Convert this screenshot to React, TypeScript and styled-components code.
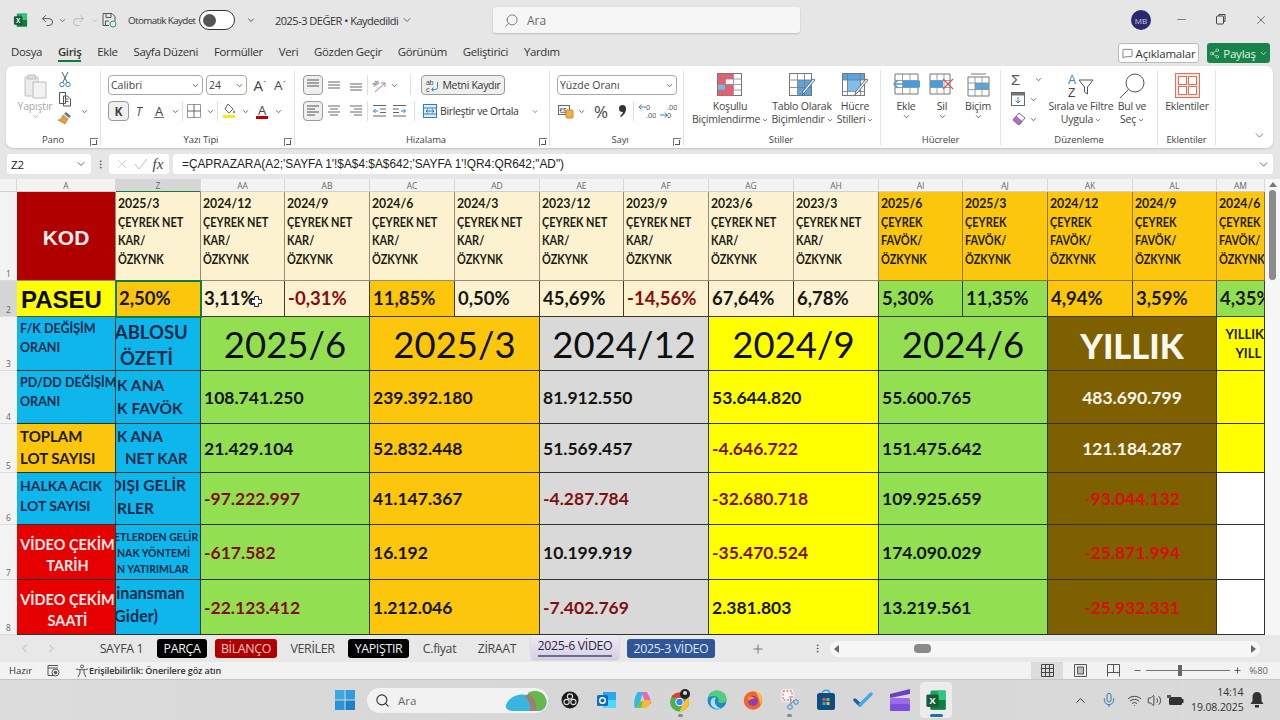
import React from 'react';
import styled, { createGlobalStyle } from 'styled-components';
import { Search, Undo2, Redo2, ChevronDown, ChevronLeft, ChevronRight, Minus, X, Plus, MessageSquare, Share2, Mic, Wifi, Volume2, ChevronUp, MoreVertical } from 'lucide-react';

const UI = '"Open Sans", "Noto Sans", sans-serif';
const CELL = 'Lato, "Open Sans", sans-serif';

const GlobalStyle = createGlobalStyle`
  html, body { margin: 0; padding: 0; background: #e6e6e6; }
  body { font-family: ${UI}; overflow: hidden; }
  * { box-sizing: border-box; }
`;

/* ---------- title bar ---------- */

const Page = styled.div`
  width: 1280px;
  height: 720px;
  display: flex;
  flex-direction: column;
  background: #e6e6e6;
  color: #333;
`;

const TitleBar = styled.div`
  height: 38px;
  display: flex;
  align-items: center;
  padding: 2px 0 0 13px;
  flex: none;
`;

const QuickIcon = styled.div<{ $w: number; $dim?: boolean; $ml?: number }>`
  width: ${p => p.$w}px;
  margin-left: ${p => p.$ml ?? 0}px;
  flex: none;
  display: flex;
  align-items: center;
  justify-content: center;
  color: ${p => (p.$dim ? '#b5b5b5' : '#444')};
`;

const AutoSave = styled.span`
  font-size: 9.8px;
  letter-spacing: -0.6px;
  margin-left: 8px;
  width: 71px;
  flex: none;
  color: #333;
  white-space: nowrap;
`;

const Toggle = styled.div`
  width: 36px;
  height: 20px;
  border: 1px solid #333;
  border-radius: 10px;
  background: #fff;
  display: flex;
  align-items: center;
  padding-left: 3px;
  flex: none;
  &::before {
    content: '';
    width: 13px;
    height: 13px;
    border-radius: 50%;
    background: #555;
  }
`;

const DocTitle = styled.div`
  font-size: 11px;
  letter-spacing: -0.5px;
  width: 218px;
  margin-left: 9px;
  flex: none;
  display: flex;
  align-items: center;
  gap: 3px;
`;

const TopSearch = styled.div`
  width: 307px;
  height: 26px;
  background: #f6f6f6;
  border-radius: 3px;
  box-shadow: 0 1px 2px rgba(0, 0, 0, 0.18);
  display: flex;
  align-items: center;
  gap: 8px;
  padding-left: 11px;
  font-size: 12px;
  color: #666;
  flex: none;
`;

const MirrorSearch = styled(Search)`
  transform: scaleX(-1);
`;

const Avatar = styled.div`
  width: 20px;
  height: 20px;
  border-radius: 50%;
  background: #2c2a6e;
  color: #cfcfe6;
  font-size: 8px;
  display: flex;
  align-items: center;
  justify-content: center;
  margin-left: 331px;
  flex: none;
`;

const WinButtons = styled.div`
  display: flex;
  margin-left: 10px;
  color: #444;
`;

const WinButton = styled.div`
  width: 40px;
  display: flex;
  justify-content: center;
`;

/* ---------- menu ---------- */

const MenuBar = styled.div`
  height: 28px;
  flex: none;
  display: flex;
  align-items: center;
  padding: 2px 10px 0 11px;
`;

const MenuItem = styled.div<{ $active?: boolean }>`
  font-size: 11.4px;
  letter-spacing: -0.3px;
  margin-right: 15.8px;
  color: #333;
  font-weight: ${p => (p.$active ? 600 : 400)};
  padding-bottom: 1px;
  border-bottom: 2px solid ${p => (p.$active ? '#107c41' : 'transparent')};
`;

const MenuActions = styled.div`
  margin-left: auto;
  display: flex;
  gap: 8px;
`;

const CommentButton = styled.div`
  width: 81px;
  height: 20px;
  background: #fff;
  border: 1px solid #bbb;
  border-radius: 3px;
  font-size: 11.5px;
  letter-spacing: -0.2px;
  display: flex;
  align-items: center;
  justify-content: center;
  gap: 3px;
`;

const ShareButton = styled.div`
  width: 63px;
  height: 20px;
  background: #17854a;
  color: #e6f3ea;
  border-radius: 3px;
  font-size: 11.5px;
  letter-spacing: -0.2px;
  display: flex;
  align-items: center;
  justify-content: center;
  gap: 3px;
`;

/* ---------- ribbon ---------- */

const Ribbon = styled.div`
  height: 82px;
  flex: none;
  margin: 0 7px 0 6px;
  background: #fff;
  border-radius: 7px;
  box-shadow: 0 1px 2px rgba(0, 0, 0, 0.15);
  display: flex;
  position: relative;
`;

const Group = styled.div<{ $w: number; $pad?: number; $noLine?: boolean }>`
  width: ${p => p.$w}px;
  flex: none;
  position: relative;
  margin: 4px 0 3px;
  padding: 2px 0 0 ${p => p.$pad ?? 0}px;
  display: flex;
  flex-direction: column;
  border-right: ${p => (p.$noLine ? 'none' : '1px solid #e2e2e2')};
`;

const GroupBody = styled.div`
  flex: 1;
  display: flex;
  min-height: 0;
`;

const GroupLabel = styled.div<{ $ml?: number }>`
  height: 17px;
  font-size: 9.5px;
  letter-spacing: -0.1px;
  color: #444;
  text-align: center;
  line-height: 24px;
  margin-left: ${p => p.$ml ?? 0}px;
`;

const Launcher = styled.div`
  position: absolute;
  right: 2px;
  bottom: -1px;
  width: 8px;
  height: 8px;
  border-left: 1px solid #777;
  border-top: 1px solid #777;
  &::after {
    content: '';
    position: absolute;
    right: 1px;
    bottom: 1px;
    width: 4px;
    height: 4px;
    border-right: 1px solid #555;
    border-bottom: 1px solid #555;
  }
`;

const Rows = styled.div`
  display: flex;
  flex-direction: column;
  gap: 6px;
  padding-top: 3px;
`;

const ToolRow = styled.div`
  display: flex;
  align-items: center;
  height: 20px;
`;

const Slot = styled.div<{ $w: number; $active?: boolean; $dim?: boolean; $fs?: number }>`
  width: ${p => p.$w}px;
  height: 20px;
  flex: none;
  display: flex;
  align-items: center;
  justify-content: center;
  font-size: ${p => p.$fs ?? 12}px;
  color: ${p => (p.$dim ? '#aaa' : '#444')};
  border-radius: 4px;
  ${p => p.$active && 'background:#efefef;border:1px solid #9a9a9a;font-weight:700;'}
`;

const Caret = styled.span`
  font-size: 8px;
  line-height: 8px;
  align-self: flex-start;
  margin-top: 4px;
`;

const Sep = styled.div<{ $mx?: number }>`
  width: 1px;
  height: 20px;
  flex: none;
  background: #dedede;
  margin: 0 ${p => p.$mx ?? 1}px;
`;

const SelectBox = styled.div<{ $w: number; $mr?: number }>`
  width: ${p => p.$w}px;
  height: 20px;
  margin-right: ${p => p.$mr ?? 0}px;
  flex: none;
  border: 1px solid #a8a8a8;
  border-radius: 4px;
  font-size: 10.5px;
  padding: 0 3px 0 2px;
  display: flex;
  align-items: center;
  justify-content: space-between;
  color: #444;
`;

const WrapButton = styled.div`
  width: 84px;
  height: 20px;
  background: #efefef;
  border: 1px solid #9a9a9a;
  border-radius: 4px;
  display: flex;
  align-items: center;
  justify-content: center;
  gap: 2px;
  font-size: 10.5px;
  letter-spacing: -0.3px;
  color: #333;
`;

const MergeButton = styled.div`
  width: 113px;
  height: 20px;
  display: flex;
  align-items: center;
  padding-left: 4px;
  gap: 3px;
  font-size: 10.5px;
  letter-spacing: -0.35px;
  color: #333;
  white-space: nowrap;
  flex: none;
`;

const BigTool = styled.div<{ $w: number }>`
  width: ${p => p.$w}px;
  flex: none;
  display: flex;
  flex-direction: column;
  align-items: center;
`;

const BigIcon = styled.div`
  height: 28px;
  padding-top: 1px;
  display: flex;
  align-items: flex-start;
  justify-content: center;
`;

const BigLabel = styled.div<{ $dim?: boolean }>`
  font-size: 10.5px;
  line-height: 13px;
  letter-spacing: -0.2px;
  white-space: nowrap;
  text-align: center;
  color: ${p => (p.$dim ? '#a8a8a8' : '#444')};
  display: flex;
  align-items: center;
  justify-content: center;
  gap: 2px;
`;

const PasteCol = styled.div`
  width: 34px;
  margin-left: 12px;
  display: flex;
  flex-direction: column;
  align-items: center;
  flex: none;
`;

const SmallCol = styled.div<{ $w?: number; $start?: boolean }>`
  width: ${p => p.$w ?? 22}px;
  margin: -1px 0 0 2px;
  display: flex;
  flex-direction: column;
  align-items: ${p => (p.$start ? 'flex-start' : 'center')};
  gap: 3px;
  flex: none;
`;

const SmallRow = styled.div<{ $w: number }>`
  width: ${p => p.$w}px;
  height: 17px;
  display: flex;
  align-items: center;
  justify-content: space-between;
  flex: none;
`;

const RibbonCollapse = styled.div`
  position: absolute;
  right: 7px;
  bottom: 6px;
  color: #555;
  display: flex;
`;

/* ---------- formula bar ---------- */

const FormulaBar = styled.div`
  height: 20px;
  margin: 6px 7px 5px 7px;
  flex: none;
  display: flex;
  align-items: stretch;
`;

const NameBox = styled.div`
  width: 84px;
  background: #fff;
  border-radius: 3px;
  font-size: 11.5px;
  padding: 0 4px;
  display: flex;
  align-items: center;
  justify-content: space-between;
  color: #222;
`;

const FormulaDots = styled.div`
  width: 18px;
  display: flex;
  align-items: center;
  justify-content: center;
  color: #555;
`;

const FormulaIcons = styled.div`
  width: 60px;
  background: #fff;
  border-radius: 3px;
  display: flex;
  align-items: center;
  justify-content: space-around;
  padding: 0 3px;
  color: #bdbdbd;
`;

const Fx = styled.span`
  font-family: 'Liberation Serif', serif;
  font-style: italic;
  font-size: 15px;
  color: #444;
`;

const FormulaInput = styled.div`
  flex: 1;
  margin-left: 4px;
  background: #fff;
  border-radius: 3px;
  font-family: 'Liberation Sans', sans-serif;
  font-size: 11.85px;
  padding: 0 3px 0 9px;
  display: flex;
  align-items: center;
  justify-content: space-between;
  color: #222;
`;

/* ---------- sheet ---------- */

const SheetArea = styled.div`
  flex: none;
  height: 456px;
  display: flex;
  background: #f3f3f3;
`;

const SheetMain = styled.div`
  width: 1265px;
  flex: none;
  display: flex;
  flex-direction: column;
`;

const ColHeaders = styled.div`
  height: 13px;
  flex: none;
  display: grid;
  grid-template-columns: 17px 99px 85px 84px 85px 85px 85px 84px 85px 85px 85px 84px 85px 85px 84px 48px;
`;

const ColHead = styled.div<{ $sel?: boolean }>`
  font-size: 8.5px;
  line-height: 13px;
  text-align: center;
  color: #666;
  overflow: hidden;
  border-right: 1px solid #d8d8d8;
  background: ${p => (p.$sel ? '#d6d6d6' : 'transparent')};
  border-bottom: 1px solid ${p => (p.$sel ? '#107c41' : '#d0d0d0')};
`;

const SheetBody = styled.div`
  display: flex;
  height: 443px;
`;

const RowHeads = styled.div`
  width: 17px;
  flex: none;
  display: grid;
  grid-template-rows: 89px 36px 54px 53px 49px 52px 55px 55px;
`;

const RowHead = styled.div<{ $sel?: boolean }>`
  font-size: 8.5px;
  color: #666;
  text-align: center;
  display: flex;
  align-items: flex-end;
  justify-content: center;
  padding-bottom: 1px;
  background: ${p => (p.$sel ? '#d6d6d6' : 'transparent')};
  border-bottom: 1px solid #dcdcdc;
`;

const Grid = styled.div`
  flex: 1;
  display: grid;
  grid-template-columns: 99px 85px 84px 85px 85px 85px 84px 85px 85px 85px 84px 85px 85px 84px 48px;
  grid-template-rows: 89px 36px 54px 53px 49px 52px 55px 55px;
  font-family: ${CELL};
  font-weight: 700;
  overflow: hidden;
  background: #fff;
`;

const Cell = styled.div<{ $bg: string; $span?: number; $line?: string; $sel?: boolean }>`
  background: ${p => p.$bg};
  grid-column: span ${p => p.$span ?? 1};
  border-right: 1px solid ${p => p.$line ?? '#29372a'};
  border-bottom: 1px solid ${p => p.$line ?? '#29372a'};
  overflow: hidden;
  position: relative;
  white-space: nowrap;
  min-width: 0;
  ${p => p.$sel && 'outline:2px solid #107c41;outline-offset:-1px;z-index:2;overflow:visible;'}
`;

const HeadText = styled.div`
  font-size: 13.2px;
  line-height: 18.7px;
  padding: 2px 0 0 2px;
  color: #1d1b10;
`;

const HeadYear = styled.div`
  transform: scaleX(0.93);
  transform-origin: left;
`;

const HeadCaps = styled.div`
  transform: scaleX(0.83);
  transform-origin: left;
`;

const Pct = styled.div<{ $neg?: boolean }>`
  font-size: 18.5px;
  line-height: 34px;
  padding-left: 3px;
  color: ${p => (p.$neg ? '#8b0a0a' : '#171711')};
`;

const Num = styled.div<{ $neg?: boolean; $white?: boolean }>`
  height: 100%;
  display: flex;
  align-items: center;
  padding-left: 3px;
  font-size: 17.5px;
  color: ${p => (p.$white ? '#f7f5ee' : p.$neg ? '#7d1010' : '#14140e')};
`;

const WhiteNum = styled(Num)`
  justify-content: center;
  padding: 0;
`;

const RedNum = styled(WhiteNum)`
  color: #d80e0e;
`;

const Year = styled.div`
  height: 100%;
  display: flex;
  align-items: center;
  justify-content: center;
  font-weight: 400;
  font-size: 36.5px;
  color: #101010;
`;

const Yillik = styled(Year)`
  font-weight: 900;
  color: #faf8f0;
  font-size: 34.5px;
  padding-top: 3px;
`;

const KodText = styled.div`
  height: 100%;
  display: flex;
  align-items: center;
  justify-content: center;
  padding-top: 3px;
  color: #fbeeee;
  font-family: 'Liberation Sans', sans-serif;
  font-size: 21px;
`;

const Paseu = styled.div`
  font-size: 24px;
  line-height: 38px;
  padding-left: 4px;
  font-family: 'Liberation Sans', sans-serif;
  color: #0a0a00;
`;

const LabelStack = styled.div<{ $color: string; $center?: boolean; $size?: number; $lh?: number; $pt?: number }>`
  color: ${p => p.$color};
  font-size: ${p => p.$size ?? 12.5}px;
  line-height: ${p => p.$lh ?? 19}px;
  padding: ${p => p.$pt ?? 2}px 0 0 3px;
  text-align: ${p => (p.$center ? 'center' : 'left')};
`;

const ZText = styled.div<{ $size: number; $lh: number; $pt: number }>`
  color: #10294a;
  font-size: ${p => p.$size}px;
  line-height: ${p => p.$lh}px;
  padding-top: ${p => p.$pt}px;
`;

const ZLine = styled.div<{ $ind?: number }>`
  text-indent: ${p => p.$ind ?? 1}px;
`;

const YearSmall = styled.div`
  font-size: 13px;
  line-height: 19px;
  padding-top: 8px;
  color: #1a1a00;
  text-align: right;
`;

const CrossCursor = styled.svg`
  position: absolute;
  left: 50px;
  top: 15px;
`;

const VScroll = styled.div`
  width: 15px;
  flex: none;
  background: #f7f7f7;
  display: flex;
  flex-direction: column;
  align-items: center;
  padding-top: 3px;
  color: #777;
`;

const ScrollUp = styled.div`
  width: 0;
  height: 0;
  border-left: 4px solid transparent;
  border-right: 4px solid transparent;
  border-bottom: 5px solid #777;
`;

const ScrollThumb = styled.div`
  width: 7px;
  height: 90px;
  margin-top: 3px;
  border-radius: 4px;
  background: #8a8a8a;
`;

/* ---------- tabs / status ---------- */

const TabsBar = styled.div`
  height: 27px;
  flex: none;
  display: flex;
  align-items: center;
  background: #e8e8e8;
  font-size: 12.4px;
  letter-spacing: -0.35px;
`;

const TabNav = styled.div`
  width: 94px;
  padding-left: 18px;
  display: flex;
  gap: 14px;
  color: #a0a0a0;
  flex: none;
`;

const SheetTab = styled.div<{ $bg?: string; $fg?: string; $w: number; $mr?: number }>`
  width: ${p => p.$w}px;
  margin-right: ${p => p.$mr ?? 8}px;
  flex: none;
  height: 19px;
  border-radius: 3px;
  background: ${p => p.$bg ?? 'transparent'};
  color: ${p => p.$fg ?? '#444'};
  display: flex;
  align-items: center;
  justify-content: center;
  white-space: nowrap;
`;

const ActiveTab = styled(SheetTab)`
  height: 24px;
  margin-top: -4px;
  background: linear-gradient(#efeaf5, #d8cfe8);
  color: #26263c;
  box-shadow: 0 1px 2px rgba(0, 0, 0, 0.15);
  span {
    border-bottom: 2px solid #5f7186;
    padding-bottom: 1px;
  }
`;

const AddSheet = styled(Plus)`
  margin-left: 28px;
  color: #555;
  flex: none;
`;

const HScrollWrap = styled.div`
  margin-left: 47px;
  display: flex;
  align-items: center;
  color: #555;
  flex: none;
`;

const HScroll = styled.div`
  width: 430px;
  height: 16px;
  border-radius: 8px;
  background: #f7f7f7;
  margin-left: 7px;
  display: flex;
  align-items: center;
  justify-content: space-between;
  padding: 0 4px;
`;

const ThumbTrack = styled.div`
  flex: 1;
  padding-left: 75px;
`;

const HThumb = styled.div`
  width: 17px;
  height: 9px;
  background: #8a8a8a;
  border-radius: 4px;
`;

const Arrow = styled.div<{ $dir: 'l' | 'r' }>`
  width: 0;
  height: 0;
  border-top: 4px solid transparent;
  border-bottom: 4px solid transparent;
  ${p => (p.$dir === 'l' ? 'border-right:5px solid #666;' : 'border-left:5px solid #666;')}
`;

const StatusBar = styled.div`
  height: 18px;
  flex: none;
  background: #f2f2f2;
  border-bottom: 1px solid #c6c6c6;
  display: flex;
  align-items: center;
  padding-left: 9px;
  font-size: 9.5px;
  color: #333;
`;

const StatusHint = styled.span`
  font-weight: 600;
  font-size: 9px;
  letter-spacing: -0.1px;
`;

const ViewBtn = styled.div<{ $active?: boolean; $w: number }>`
  width: ${p => p.$w}px;
  height: 17px;
  display: flex;
  align-items: center;
  justify-content: center;
  flex: none;
  background: ${p => (p.$active ? '#dcdcdc' : 'transparent')};
`;

const StatusRight = styled.div`
  margin-left: auto;
  display: flex;
  align-items: center;
  padding-right: 12px;
`;

const ZoomTrack = styled.div`
  width: 84px;
  height: 1px;
  background: #777;
  margin: 0 1px 0 2px;
  display: flex;
  align-items: center;
  padding-left: 32px;
`;

const ZoomThumb = styled.div`
  width: 4px;
  height: 11px;
  background: #666;
`;

const ZoomText = styled.span`
  font-size: 9.5px;
  color: #666;
  margin-left: 6px;
`;

/* ---------- taskbar ---------- */

const Taskbar = styled.div`
  height: 40px;
  flex: none;
  background: linear-gradient(90deg, #dcdcdc, #d6d6d6 50%, #dadada);
  display: flex;
  align-items: center;
  padding-left: 335px;
`;

const TaskSearch = styled.div`
  width: 181px;
  height: 25px;
  margin-left: 12px;
  margin-right: 4px;
  border-radius: 13px;
  background: #f2f2f2;
  display: flex;
  align-items: center;
  padding-left: 8px;
  gap: 8px;
  font-size: 11.5px;
  color: #666;
  position: relative;
  flex: none;
`;

const SearchArt = styled.svg`
  position: absolute;
  right: 0;
  top: 1px;
`;

const TaskIcon = styled.div<{ $active?: boolean }>`
  width: 36.6px;
  height: 36px;
  flex: none;
  display: flex;
  align-items: center;
  justify-content: center;
  position: relative;
  border-radius: 4px;
  ${p => p.$active && 'background:#ececec;width:32px;margin:0 2.3px;'}
`;

const ActiveMark = styled.div`
  position: absolute;
  bottom: 1px;
  width: 13px;
  height: 3px;
  border-radius: 2px;
  background: #1f6fb5;
`;

const RunMark = styled.div`
  position: absolute;
  bottom: 1px;
  width: 5px;
  height: 3px;
  border-radius: 2px;
  background: #8a8a8a;
`;

const Tray = styled.div`
  margin-left: 114px;
  display: flex;
  align-items: center;
  color: #333;
  flex: none;
`;

const TrayIcon = styled.div<{ $w: number; $blue?: boolean }>`
  width: ${p => p.$w}px;
  display: flex;
  justify-content: center;
  color: ${p => (p.$blue ? '#2f6fb0' : '#333')};
  flex: none;
`;

const Clock = styled.div`
  width: 53px;
  margin-left: 6px;
  text-align: right;
  font-size: 10.5px;
  line-height: 15px;
  letter-spacing: -0.1px;
  color: #333;
`;

/* ---------- drawings ---------- */

const Chev = ({ s = 7, c = '#555' }: { s?: number; c?: string }) => (
  <svg width={s} height={s} viewBox="0 0 8 8" fill="none"><path d="M1.2 2.6 4 5.4l2.8-2.8" stroke={c} strokeWidth="1" /></svg>
);

const ExcelIcon = ({ s = 16 }: { s?: number }) => (
  <svg width={s} height={s} viewBox="0 0 16 16">
    <rect x="4" y="1" width="11" height="14" rx="1" fill="#21a366" />
    <rect x="9.5" y="1" width="5.5" height="7" fill="#33c481" />
    <rect x="4" y="8" width="11" height="7" fill="#107c41" />
    <rect x="1" y="4" width="9" height="9" rx="1" fill="#185c37" />
    <text x="5.5" y="11" textAnchor="middle" fontSize="7" fontWeight="700" fontFamily="Liberation Sans" fill="#fff">X</text>
  </svg>
);

const SaveIcon = () => (
  <svg width="16" height="16" viewBox="0 0 16 16" fill="none" stroke="#555">
    <path d="M2 1.5h9l3 3V9M2 1.5v12H8" />
    <path d="M5 1.5v4h5v-4M4.500 13.5V9H8" />
    <circle cx="12" cy="12" r="3" stroke="#2f9e62" />
  </svg>
);

const PasteIcon = () => (
  <svg width="25" height="26" viewBox="0 0 25 26" fill="none">
    <path d="M2 4h13v19H2z" fill="#ececec" stroke="#c4c4c4" />
    <path d="M5 2h7l1 4H4z" fill="#dedede" stroke="#bdbdbd" />
    <path d="M10 9h13v16H10z" fill="#f2f2f2" stroke="#bcbcbc" />
  </svg>
);

const ScissorsIcon = () => (
  <svg width="14" height="17" viewBox="0 0 14 17" fill="none" stroke="#3f5f7a" strokeWidth="1">
    <path d="M4 1l5 10M10 1 5 11" />
    <circle cx="4" cy="13.5" r="2.2" stroke="#2f86c8" />
    <circle cx="10" cy="13.5" r="2.2" stroke="#2f86c8" />
  </svg>
);

const CopyIcon = () => (
  <svg width="14" height="16" viewBox="0 0 14 16" fill="none" stroke="#555">
    <path d="M1.5 1.5h6v11h-6zM5.5 5h4l3 3v7h-7z" fill="#fff" />
    <path d="M7.5 8h3M7.5 10.5h3" />
  </svg>
);

const BrushIcon = () => (
  <svg width="16" height="16" viewBox="0 0 16 16">
    <path d="M9 2l5 4-2 2-5-4z" fill="#777" />
    <path d="M6 5l5 4-3 5-7-4c2 0 4-2 5-5z" fill="#e0a03c" stroke="#a8701c" strokeWidth=".6" />
  </svg>
);

const Lines = ({ rows, active }: { rows: number[][]; active?: boolean }) => (
  <svg width="14" height="14" viewBox="0 0 14 14" stroke={active ? '#555' : '#666'} strokeWidth="1">
    {rows.map(([a, b, y], i) => <line key={i} x1={a} x2={b} y1={y} y2={y} />)}
  </svg>
);

const BordersIcon = () => (
  <svg width="14" height="14" viewBox="0 0 14 14" fill="none" stroke="#999">
    <path d="M.5.5h13v13H.5z" /><path d="M7 .5v13M.5 7h13" stroke="#666" />
  </svg>
);

const FillIcon = () => (
  <svg width="16" height="16" viewBox="0 0 16 16">
    <path d="M7 1l5 5-4 4-4-4z" fill="#fff" stroke="#666" />
    <path d="M13 7c1 2 1.5 3 0 3s-1-1 0-3z" fill="#666" />
    <rect x="2" y="12" width="12" height="3" fill="#f5ea1e" />
  </svg>
);

const FontColorA = styled.span`
  font-size: 13px;
  line-height: 12px;
  color: #444;
  border-bottom: 3px solid #c00000;
  padding: 0 2px;
`;

const UnderA = styled.span`
  font-size: 13px;
  line-height: 12px;
  color: #444;
  border-bottom: 1px solid #666;
  padding: 0 1px;
`;

const OrientIcon = () => (
  <svg width="17" height="17" viewBox="0 0 17 17" fill="none">
    <text x="3" y="9" fontSize="6.5" fill="#555" transform="rotate(-35 5 8)" fontFamily="Liberation Sans">ab</text>
    <path d="M5 15 15 6M11 6h4v4" stroke="#c06ea8" />
  </svg>
);

const WrapIcon = () => (
  <svg width="15" height="15" viewBox="0 0 15 15" fill="none">
    <text x="1" y="7" fontSize="7" fill="#444" fontFamily="Liberation Sans">ab</text>
    <text x="1" y="14" fontSize="7" fill="#444" fontFamily="Liberation Sans">c</text>
    <path d="M12.5 4v5.500a2 2 0 0 1-2 2H7M8.500 9.500l-2 2 2 2" stroke="#2f86c8" />
  </svg>
);

const MergeIcon = () => (
  <svg width="14" height="14" viewBox="0 0 14 14" fill="none">
    <rect x=".5" y=".5" width="13" height="13" fill="#dcecf8" stroke="#2f7fb8" />
    <path d="M.5 4h13M.5 10h13" stroke="#2f7fb8" />
    <path d="M3 7h8M3 7l2-1.500M3 7l2 1.500M11 7 9 5.500M11 7 9 8.500" stroke="#2f7fb8" />
  </svg>
);

const IndentSvg = styled.svg<{ $flip?: boolean }>`
  ${p => p.$flip && 'transform: scaleX(-1);'}
`;

const IndentIcon = ({ flip }: { flip?: boolean }) => (
  <IndentSvg width="15" height="14" viewBox="0 0 15 14" stroke="#666" $flip={flip}>
    <path d="M1 1.500h13M8 5h6M8 8.500h6M1 12h13" />
    <path d="M6 7H1.500M3.500 5 1.500 7l2 2" stroke="#2f86c8" fill="none" />
  </IndentSvg>
);

const AccountIcon = () => (
  <svg width="17" height="15" viewBox="0 0 17 15">
    <rect x=".5" y="1.500" width="11" height="9" fill="#fff" stroke="#666" />
    <text x="1.500" y="8.500" fontSize="6.500" fontFamily="Liberation Sans" fill="#444">€$</text>
    <rect x="8" y="6" width="7" height="8" rx="1" fill="#f0b04a" stroke="#c88a24" />
  </svg>
);

const CommaIcon = () => (
  <svg width="9" height="14" viewBox="0 0 9 14">
    <circle cx="4.500" cy="4.500" r="3.500" fill="#333" />
    <path d="M8 5c0 3-2 6-5 8l-1-1c2-1.500 3-3 3-5z" fill="#333" />
  </svg>
);

const DecIcon = ({ up }: { up?: boolean }) => (
  <svg width="18" height="18" viewBox="0 0 18 18" fill="none">
    <text x="8" y="8" fontSize="7.500" fill="#555" fontFamily="Liberation Sans">{up ? '.00' : '0'}</text>
    <text x="8" y="16" fontSize="7.500" fill="#555" fontFamily="Liberation Sans">{up ? '0' : '.00'}</text>
    {up
      ? <path d="M1 13h7M6 10.500 8 13l-2 2.500" stroke="#2f86c8" />
      : <path d="M1 5h7M3.500 2.500 1 5l2.500 2.500" stroke="#2f86c8" />}
  </svg>
);

const StyleGrid = ({ children }: { children: React.ReactNode }) => (
  <svg width="26" height="24" viewBox="0 0 26 24" fill="none">
    <rect x=".5" y=".5" width="24" height="22" fill="#fff" stroke="#777" />
    {children}
    <path d="M.5 6h24M.5 11.500h24M.5 17h24M8.500.5v22M16.500.5v22" stroke="#888" strokeWidth=".8" />
  </svg>
);

const CondIcon = () => (
  <StyleGrid>
    <rect x="1" y="1" width="15" height="5" fill="#ee5c72" />
    <rect x="1" y="6" width="7" height="5.500" fill="#ee5c72" />
    <rect x="8" y="6" width="8" height="5.500" fill="#f8f8f8" />
    <rect x="1" y="11.500" width="7" height="5.500" fill="#7fb6e6" />
    <rect x="8" y="11.500" width="8" height="5.500" fill="#ee5c72" />
    <rect x="1" y="17" width="15" height="5.500" fill="#ee5c72" />
  </StyleGrid>
);

const Paint = () => (
  <path d="M26 7 16 19l-3 3 1-4L24 6z" fill="#eef4fa" stroke="#5b6f82" />
);

const TableIcon = () => (
  <svg width="27" height="26" viewBox="0 0 27 26" fill="none">
    <rect x=".5" y=".5" width="22" height="22" fill="#fff" stroke="#777" />
    <rect x="9" y="7" width="13" height="15" fill="#5aa5e0" />
    <path d="M.5 7h22M.5 14.500h22M8.500.5v22M15.500.5v22" stroke="#777" strokeWidth=".8" />
    <Paint />
  </svg>
);

const CellStyleIcon = () => (
  <svg width="27" height="26" viewBox="0 0 27 26" fill="none">
    <rect x=".5" y=".5" width="22" height="22" fill="#fff" stroke="#777" />
    <rect x="1" y="1" width="21" height="6" fill="#5aa5e0" />
    <rect x="5" y="7" width="14" height="11" fill="#7fbdea" />
    <path d="M5.500.5v22M18.500.5v22M.5 18.500h22M.5 7h22" stroke="#777" strokeWidth=".8" />
    <Paint />
  </svg>
);

const InsertIcon = () => (
  <svg width="27" height="22" viewBox="0 0 27 22" fill="none">
    <path d="M2 1h23v20H2z" fill="#fff" stroke="#777" />
    <path d="M2 7.500h23M2 14.500h23M9.500 1v20M17 1v20" stroke="#888" strokeWidth=".8" />
    <rect x="10" y="7.500" width="17" height="7" fill="#4b9bd8" />
    <path d="M12 11H1M5 7 1 11l4 4" stroke="#4b9bd8" strokeWidth="1.500" fill="#fff" />
  </svg>
);

const DeleteIcon = () => (
  <svg width="26" height="22" viewBox="0 0 26 22" fill="none">
    <path d="M1 1h20v20H1z" fill="#fff" stroke="#777" />
    <path d="M1 7.500h20M1 14.500h20M8 1v20M15 1v20" stroke="#888" strokeWidth=".8" />
    <rect x="1" y="7.500" width="13" height="7" fill="#4b9bd8" />
    <path d="M14 6l10 10M24 6 14 16" stroke="#d9534f" strokeWidth="1.200" />
  </svg>
);

const FormatIcon = () => (
  <svg width="25" height="24" viewBox="0 0 25 24" fill="none">
    <path d="M5 1h15" stroke="#777" />
    <path d="M2 4h21v19H2z" fill="#fff" stroke="#777" />
    <rect x="9" y="10" width="14" height="6.500" fill="#5aa5e0" />
    <path d="M2 10h21M2 16.500h21M9 4v19M16 4v19" stroke="#888" strokeWidth=".8" />
  </svg>
);

const SigmaIcon = styled.span`
  font-size: 15px;
  line-height: 16px;
  font-family: 'Liberation Sans', sans-serif;
  color: #555;
`;

const FillDown = () => (
  <svg width="15" height="15" viewBox="0 0 15 15" fill="none">
    <rect x=".5" y=".5" width="13" height="13" fill="#fff" stroke="#666" />
    <rect x="1" y="1" width="12" height="2.500" fill="#777" />
    <path d="M7 5v6M4.500 8.500 7 11l2.500-2.500" stroke="#2f86c8" />
  </svg>
);

const EraserIcon = () => (
  <svg width="15" height="15" viewBox="0 0 15 15">
    <path d="M8 1l6 5-6 7-6-5z" fill="#fff" stroke="#8a5aa8" />
    <path d="M5 4.500l6 5L8 13 2 8z" fill="#b66cc8" stroke="#8a5aa8" />
  </svg>
);

const SortIcon = () => (
  <svg width="28" height="26" viewBox="0 0 28 26" fill="none">
    <text x="1" y="11" fontSize="12" fill="#2f86c8" fontFamily="Liberation Sans">A</text>
    <text x="1" y="24" fontSize="12" fill="#444" fontFamily="Liberation Sans">Z</text>
    <path d="M12 7h14l-5.500 7v7l-3-2v-5z" stroke="#555" fill="#fff" />
  </svg>
);

const FindIcon = () => (
  <svg width="28" height="26" viewBox="0 0 28 26" fill="none" stroke="#555">
    <circle cx="17" cy="10" r="9" fill="#fff" />
    <path d="M10.500 16.500 2 25" />
  </svg>
);

const AddinIcon = () => (
  <svg width="25" height="25" viewBox="0 0 25 25" fill="none">
    <rect x=".5" y=".5" width="24" height="24" fill="#fbe3dc" stroke="#d9735a" />
    <rect x="3.500" y="3.500" width="8" height="8" fill="#fff" stroke="#d9735a" />
    <rect x="13.500" y="3.500" width="8" height="8" fill="#fff" stroke="#d9735a" />
    <rect x="3.500" y="13.500" width="8" height="8" fill="#fff" stroke="#d9735a" />
    <rect x="13.500" y="13.500" width="8" height="8" fill="#fff" stroke="#d9735a" />
  </svg>
);

const WinLogo = () => (
  <svg width="20" height="20" viewBox="0 0 20 20">
    <rect x="0" y="0" width="9.500" height="9.500" fill="#3da8e0" />
    <rect x="10.500" y="0" width="9.500" height="9.500" fill="#2f9be0" />
    <rect x="0" y="10.500" width="9.500" height="9.500" fill="#2b93d8" />
    <rect x="10.500" y="10.500" width="9.500" height="9.500" fill="#1f80c8" />
  </svg>
);

const ObsIcon = () => (
  <svg width="18" height="18" viewBox="0 0 18 18">
    <circle cx="9" cy="9" r="8.500" fill="#1b1b1b" />
    <circle cx="9" cy="5.500" r="2.600" fill="none" stroke="#ddd" strokeWidth="1.100" />
    <circle cx="5.600" cy="11" r="2.600" fill="none" stroke="#ddd" strokeWidth="1.100" />
    <circle cx="12.400" cy="11" r="2.600" fill="none" stroke="#ddd" strokeWidth="1.100" />
  </svg>
);

const OutlookIcon = () => (
  <svg width="20" height="18" viewBox="0 0 20 18">
    <path d="M6 1h13v13H6z" fill="#28a8ea" />
    <path d="M6 9h13v7a1 1 0 0 1-1 1H6z" fill="#50d9ff" />
    <rect x="0" y="4" width="11" height="11" rx="1.500" fill="#0f6cbd" />
    <circle cx="5.500" cy="9.500" r="2.800" fill="none" stroke="#fff" strokeWidth="1.400" />
  </svg>
);

const CopilotIcon = () => (
  <svg width="20" height="20" viewBox="0 0 20 20">
    <path d="M5 2h5l-3 10-3 6H2C0 14 2 4 5 2z" fill="#2fb8e8" />
    <path d="M10 2h4c1 3 5 8 4 12h-5L9 4z" fill="#e56ab8" />
    <path d="M6 18l3-8h9c0 4-3 8-6 8z" fill="#f6b73c" />
    <path d="M4 18l3-7 3 1-2 6z" fill="#6cc644" />
  </svg>
);

const ChromeIcon = () => (
  <svg width="22" height="24" viewBox="0 0 22 24">
    <circle cx="10.500" cy="14" r="9.500" fill="#4caf50" />
    <path d="M10.500 4.500a9.500 9.500 0 0 1 8.200 4.800l-8.200.5-8.200-.5A9.500 9.500 0 0 1 10.500 4.500z" fill="#e53935" />
    <path d="M18.700 9.300a9.500 9.500 0 0 1-8.200 14.200l3.600-8z" fill="#fbc02d" />
    <circle cx="10.500" cy="14" r="4.200" fill="#fff" />
    <circle cx="10.500" cy="14" r="3.200" fill="#3b82f6" />
    <circle cx="16" cy="6" r="5" fill="#222" />
    <circle cx="16" cy="5" r="2" fill="#ddd" />
  </svg>
);

const EdgeIcon = () => (
  <svg width="20" height="20" viewBox="0 0 20 20">
    <circle cx="10" cy="10" r="9.500" fill="#1e88c9" />
    <path d="M.8 8C2 3 6 .5 10 .5c5 0 9.500 4 9.500 8.500 0 2.500-2 4-5 4-2 0-3.500-.8-3.500-1.600 0-.4.6-.6.6-1.600C11.600 7.800 9.500 6 7 6 4 6 1.500 7 .8 8z" fill="#4fcf78" />
    <path d="M6 17c-2-1-3-4-2-7 1-2 3-3 5-2-1 1-2 4 0 7 1 2 3 3 5 3-2 1.500-6 1-8-1z" fill="#aee2f8" />
  </svg>
);

const FirefoxIcon = () => (
  <svg width="20" height="20" viewBox="0 0 20 20">
    <circle cx="10" cy="10.500" r="9.200" fill="#f2642c" />
    <path d="M12 1c4 1 7 5 7 9 0 2-1 3-2 5 0-5-2-9-5-14z" fill="#fdbb30" />
    <circle cx="10" cy="11" r="5" fill="#8c3fb8" />
    <path d="M5 7c3-1 6 0 7 2-2-.5-5 0-6 2-1-1-1-3-1-4z" fill="#ff9a2e" />
  </svg>
);

const SnipIcon = () => (
  <svg width="20" height="24" viewBox="0 0 20 24" fill="none">
    <rect x="1" y="1" width="13" height="13" rx="2" fill="#f6f6f6" stroke="#ddd" />
    <path d="M3 3h9v9H3z" stroke="#d9534f" strokeDasharray="2 1.500" />
    <path d="M10 8l1 8M14 12l-3 4" stroke="#888" />
    <circle cx="10" cy="19" r="2.300" stroke="#2f86c8" />
    <circle cx="16" cy="14" r="2.300" stroke="#2f86c8" />
  </svg>
);

const StoreIcon = () => (
  <svg width="20" height="22" viewBox="0 0 20 22">
    <path d="M6 5c0-5 8-5 8 0" fill="none" stroke="#3a9fd8" strokeWidth="1.300" />
    <rect x="1" y="4" width="18" height="17" rx="2.500" fill="#0f4d80" />
    <rect x="6.500" y="9" width="3" height="3" fill="#e8563a" />
    <rect x="10.500" y="9" width="3" height="3" fill="#7ac043" />
    <rect x="6.500" y="13" width="3" height="3" fill="#2fa8e8" />
    <rect x="10.500" y="13" width="3" height="3" fill="#f5c02c" />
  </svg>
);

const TodoIcon = () => (
  <svg width="20" height="16" viewBox="0 0 20 16" fill="none">
    <path d="M2 8l5 5" stroke="#1f5fa8" strokeWidth="3.400" strokeLinecap="round" />
    <path d="M7 13 18 2" stroke="#46a8e8" strokeWidth="3.400" strokeLinecap="round" />
  </svg>
);

const ClapIcon = () => (
  <svg width="20" height="24" viewBox="0 0 20 24">
    <path d="M0 6 20 1v5L0 10z" fill="#6c3fc0" />
    <rect x="0" y="10" width="20" height="13" rx="1.500" fill="#9c6ce8" />
    <rect x="0" y="16" width="20" height="7" rx="1.500" fill="#7d4fdb" />
  </svg>
);

const BellIcon = () => (
  <svg width="14" height="18" viewBox="0 0 14 18">
    <path d="M7 1c3 0 4.500 2 4.500 5v4l2 3H.5l2-3V6C2.500 3 4 1 7 1z" fill="#333" />
    <rect x="5" y="14" width="4" height="2.500" fill="#333" />
  </svg>
);

const BatteryIcon = () => (
  <svg width="18" height="14" viewBox="0 0 18 14">
    <rect x="3" y="4" width="13" height="8" rx="1.500" fill="#333" />
    <rect x="16" y="6" width="1.500" height="4" fill="#333" />
    <path d="M1 2h4v3H1z" fill="#555" />
  </svg>
);

const MacroIcon = () => (
  <svg width="13" height="13" viewBox="0 0 13 13" fill="none" stroke="#555">
    <path d="M1 1.500h10M1 4h10M1 1.500v10h5" />
    <circle cx="8.500" cy="8.500" r="3.500" />
    <circle cx="8.500" cy="8.500" r="1.300" fill="#555" />
  </svg>
);

const AccessIcon = () => (
  <svg width="14" height="14" viewBox="0 0 14 14" fill="none" stroke="#555">
    <circle cx="7" cy="2.500" r="1.500" />
    <path d="M1 5c3 1 9 1 12 0M5 6v3l-2 4M9 6v3l2 4" />
  </svg>
);

const NormalView = () => (
  <svg width="13" height="13" viewBox="0 0 13 13" fill="none" stroke="#444">
    <path d="M.5.500h12v12H.5zM.5 4.500h12M.5 8.500h12M4.500.500v12M8.500.500v12" />
  </svg>
);

const PageView = () => (
  <svg width="13" height="13" viewBox="0 0 13 13" fill="none" stroke="#555">
    <path d="M.5.500h12v12H.5z" /><path d="M3.500 3h6v7h-6z" fill="#bbb" />
  </svg>
);

const BreakView = () => (
  <svg width="13" height="13" viewBox="0 0 13 13" fill="none" stroke="#555">
    <path d="M.5 12.500V.500h12v12M.5 8.500h12M6.500.500v8" />
  </svg>
);

/* ---------- data ---------- */

const columns = ['A', 'Z', 'AA', 'AB', 'AC', 'AD', 'AE', 'AF', 'AG', 'AH', 'AI', 'AJ', 'AK', 'AL', 'AM'];

const CREAM = '#fcf2d0';
const ORANGE = '#fbc60b';
const GREEN = '#93df52';
const BLUE = '#0db7ec';
const GRAY = '#d9d9d9';
const YELLOW = '#ffff00';
const BROWN = '#7f6000';

const netHeads = ['2025/3', '2024/12', '2024/9', '2024/6', '2024/3', '2023/12', '2023/9', '2023/6', '2023/3'];
const favokHeads = ['2025/6', '2025/3', '2024/12', '2024/9', '2024/6'];

const pcts: { v: string; bg: string; neg?: boolean }[] = [
  { v: '2,50%', bg: ORANGE },
  { v: '3,11%', bg: CREAM },
  { v: '-0,31%', bg: CREAM, neg: true },
  { v: '11,85%', bg: ORANGE },
  { v: '0,50%', bg: CREAM },
  { v: '45,69%', bg: CREAM },
  { v: '-14,56%', bg: CREAM, neg: true },
  { v: '67,64%', bg: CREAM },
  { v: '6,78%', bg: CREAM },
  { v: '5,30%', bg: GREEN },
  { v: '11,35%', bg: GREEN },
  { v: '4,94%', bg: ORANGE },
  { v: '3,59%', bg: ORANGE },
  { v: '4,35%', bg: GREEN },
];

const blockColors = [GREEN, ORANGE, GRAY, YELLOW, GREEN];
const years = ['2025/6', '2025/3', '2024/12', '2024/9', '2024/6'];

const numberRows = [
  ['108.741.250', '239.392.180', '81.912.550', '53.644.820', '55.600.765', '483.690.799'],
  ['21.429.104', '52.832.448', '51.569.457', '-4.646.722', '151.475.642', '121.184.287'],
  ['-97.222.997', '41.147.367', '-4.287.784', '-32.680.718', '109.925.659', '-93.044.132'],
  ['-617.582', '16.192', '10.199.919', '-35.470.524', '174.090.029', '-25.871.994'],
  ['-22.123.412', '1.212.046', '-7.402.769', '2.381.803', '13.219.561', '-25.932.331'],
];

const sideRows = [
  {
    bg: BLUE,
    label: <LabelStack $color="#10294a">PD/DD DEĞİŞİM<br />ORANI</LabelStack>,
    z: <ZText $size={15.5} $lh={23} $pt={3}><ZLine>K ANA</ZLine><ZLine>K FAVÖK</ZLine></ZText>,
  },
  {
    bg: ORANGE,
    label: <LabelStack $color="#1d1a05" $size={15} $lh={22} $pt={1}>TOPLAM<br />LOT SAYISI</LabelStack>,
    z: <ZText $size={15} $lh={22} $pt={1}><ZLine>K ANA</ZLine><ZLine $ind={9}>NET KAR</ZLine></ZText>,
  },
  {
    bg: BLUE,
    label: <LabelStack $color="#10294a" $size={14} $lh={20} $pt={3}>HALKA ACIK<br />LOT SAYISI</LabelStack>,
    z: <ZText $size={15.5} $lh={23} $pt={1}><ZLine $ind={-6}>DIŞI GELİR</ZLine><ZLine>RLER</ZLine></ZText>,
  },
  {
    bg: '#e60000',
    label: <LabelStack $color="#fbeaea" $center $size={14.5} $lh={21} $pt={9}>VİDEO ÇEKİM<br />TARİH</LabelStack>,
    z: <ZText $size={10.5} $lh={16} $pt={4}><ZLine $ind={-2}>ETLERDEN GELİR</ZLine><ZLine>NAK YÖNTEMİ</ZLine><ZLine>N YATIRIMLAR</ZLine></ZText>,
  },
  {
    bg: '#e60000',
    label: <LabelStack $color="#fbeaea" $center $size={14.5} $lh={21} $pt={9}>VİDEO ÇEKİM<br />SAATİ</LabelStack>,
    z: <ZText $size={16.2} $lh={23} $pt={1}><ZLine $ind={-9}>Finansman</ZLine><ZLine $ind={-6}>(Gider)</ZLine></ZText>,
  },
];

/* ---------- parts ---------- */

function Sheet() {
  return (
    <Grid>
      <Cell $bg="#b00000" $line="#8e8e7a"><KodText>KOD</KodText></Cell>
      {netHeads.map(h => (
        <Cell key={h} $bg={CREAM} $line="#8e8e7a">
          <HeadText>
            <HeadYear>{h}</HeadYear>
            <HeadCaps>ÇEYREK NET</HeadCaps>
            <HeadCaps>KAR/</HeadCaps>
            <HeadCaps>ÖZKYNK</HeadCaps>
          </HeadText>
        </Cell>
      ))}
      {favokHeads.map(h => (
        <Cell key={'f' + h} $bg={ORANGE} $line="#8a7a30">
          <HeadText>
            <HeadYear>{h}</HeadYear>
            <HeadCaps>ÇEYREK</HeadCaps>
            <HeadCaps>FAVÖK/</HeadCaps>
            <HeadCaps>ÖZKYNK</HeadCaps>
          </HeadText>
        </Cell>
      ))}

      <Cell $bg={YELLOW} $line="#55592a"><Paseu>PASEU</Paseu></Cell>
      {pcts.map((p, i) => (
        <Cell key={p.v} $bg={p.bg} $line="#3c3c2c" $sel={i === 0}>
          <Pct $neg={p.neg}>{p.v}</Pct>
          {i === 1 && (
            <CrossCursor width="11" height="11" viewBox="0 0 11 11">
              <path d="M3.500 .5h4v3h3v4h-3v3h-4v-3h-3v-4h3z" fill="#fff" stroke="#222" />
            </CrossCursor>
          )}
        </Cell>
      ))}

      <Cell $bg={BLUE}><LabelStack $color="#10294a">F/K DEĞİŞİM<br />ORANI</LabelStack></Cell>
      <Cell $bg={BLUE}>
        <ZText $size={18.5} $lh={26} $pt={2}><ZLine $ind={-11}>TABLOSU</ZLine><ZLine $ind={4}>ÖZETİ</ZLine></ZText>
      </Cell>
      {years.map((y, i) => (
        <Cell key={y} $bg={blockColors[i]} $span={2}><Year>{y}</Year></Cell>
      ))}
      <Cell $bg={BROWN} $span={2}><Yillik>YILLIK</Yillik></Cell>
      <Cell $bg={YELLOW}>
        <YearSmall>YILLIK<br />YILL&nbsp;</YearSmall>
      </Cell>

      {numberRows.map((row, r) => (
        <React.Fragment key={r}>
          <Cell $bg={sideRows[r].bg}>{sideRows[r].label}</Cell>
          <Cell $bg={BLUE}>{sideRows[r].z}</Cell>
          {row.slice(0, 5).map((v, i) => (
            <Cell key={i} $bg={blockColors[i]} $span={2}>
              <Num $neg={v.startsWith('-')}>{v}</Num>
            </Cell>
          ))}
          <Cell $bg={BROWN} $span={2}>
            {row[5].startsWith('-') ? <RedNum>{row[5]}</RedNum> : <WhiteNum $white>{row[5]}</WhiteNum>}
          </Cell>
          <Cell $bg={r < 2 ? YELLOW : '#fff'} />
        </React.Fragment>
      ))}
    </Grid>
  );
}

function RibbonBar() {
  return (
    <Ribbon>
      <Group $w={95}>
        <GroupBody>
          <PasteCol>
            <BigIcon><PasteIcon /></BigIcon>
            <BigLabel $dim>Yapıştır</BigLabel>
            <Chev c="#aaa" />
          </PasteCol>
          <SmallCol>
            <ScissorsIcon />
            <CopyIcon />
            <BrushIcon />
          </SmallCol>
          <Rows><ToolRow /><Slot $w={16}><Chev /></Slot></Rows>
        </GroupBody>
        <GroupLabel>Pano</GroupLabel>
        <Launcher />
      </Group>

      <Group $w={194} $pad={7}>
        <GroupBody>
          <Rows>
            <ToolRow>
              <SelectBox $w={95} $mr={3}>Calibri<Chev /></SelectBox>
              <SelectBox $w={41} $mr={3}>24<Chev /></SelectBox>
              <Slot $w={20} $fs={15}>A<Caret>ˆ</Caret></Slot>
              <Slot $w={20} $fs={13.5}>A<Caret>ˇ</Caret></Slot>
            </ToolRow>
            <ToolRow>
              <Slot $w={21} $active>K</Slot>
              <Slot $w={20}><i>T</i></Slot>
              <Slot $w={20}><UnderA>A</UnderA></Slot>
              <Slot $w={12}><Chev /></Slot>
              <Sep />
              <Slot $w={20}><BordersIcon /></Slot>
              <Slot $w={12}><Chev /></Slot>
              <Sep />
              <Slot $w={20}><FillIcon /></Slot>
              <Slot $w={12}><Chev /></Slot>
              <Slot $w={22}><FontColorA>A</FontColorA></Slot>
              <Slot $w={11}><Chev /></Slot>
            </ToolRow>
          </Rows>
        </GroupBody>
        <GroupLabel>Yazı Tipi</GroupLabel>
        <Launcher />
      </Group>

      <Group $w={255} $pad={8}>
        <GroupBody>
          <Rows>
            <ToolRow>
              <Slot $w={20} $active><Lines active rows={[[1, 13, 2], [1, 13, 5], [1, 13, 8]]} /></Slot>
              <Slot $w={22}><Lines rows={[[1, 13, 4], [1, 13, 7], [1, 13, 10]]} /></Slot>
              <Slot $w={21}><Lines rows={[[1, 13, 6], [1, 13, 9], [1, 13, 12]]} /></Slot>
              <Sep $mx={1} />
              <Slot $w={19}><OrientIcon /></Slot>
              <Slot $w={12}><Chev /></Slot>
              <Sep $mx={10} />
              <WrapButton><WrapIcon />Metni Kaydır</WrapButton>
            </ToolRow>
            <ToolRow>
              <Slot $w={20} $active><Lines active rows={[[1, 13, 2], [1, 9, 5], [1, 13, 8], [1, 9, 11]]} /></Slot>
              <Slot $w={22}><Lines rows={[[1, 13, 2], [3, 11, 5], [1, 13, 8], [3, 11, 11]]} /></Slot>
              <Slot $w={21}><Lines rows={[[1, 13, 2], [5, 13, 5], [1, 13, 8], [5, 13, 11]]} /></Slot>
              <Sep $mx={1} />
              <Slot $w={20}><IndentIcon /></Slot>
              <Slot $w={21}><IndentIcon flip /></Slot>
              <Sep $mx={4} />
              <MergeButton><MergeIcon />Birleştir ve Ortala</MergeButton>
              <Slot $w={6}><Chev /></Slot>
            </ToolRow>
          </Rows>
        </GroupBody>
        <GroupLabel>Hizalama</GroupLabel>
        <Launcher />
      </Group>

      <Group $w={134} $pad={7}>
        <GroupBody>
          <Rows>
            <ToolRow><SelectBox $w={120}>Yüzde Oranı<Chev /></SelectBox></ToolRow>
            <ToolRow>
              <Slot $w={18}><AccountIcon /></Slot>
              <Slot $w={12}><Chev /></Slot>
              <Slot $w={28} $fs={17}>%</Slot>
              <Slot $w={14}><CommaIcon /></Slot>
              <Sep $mx={4} />
              <Slot $w={18}><DecIcon /></Slot>
              <Slot $w={24}><DecIcon up /></Slot>
            </ToolRow>
          </Rows>
        </GroupBody>
        <GroupLabel>Sayı</GroupLabel>
        <Launcher />
      </Group>

      <Group $w={197} $pad={6}>
        <GroupBody>
          <BigTool $w={80}>
            <BigIcon><CondIcon /></BigIcon>
            <BigLabel>Koşullu</BigLabel>
            <BigLabel>Biçimlendirme<Chev s={6} /></BigLabel>
          </BigTool>
          <BigTool $w={64}>
            <BigIcon><TableIcon /></BigIcon>
            <BigLabel>Tablo Olarak</BigLabel>
            <BigLabel>Biçimlendir<Chev s={6} /></BigLabel>
          </BigTool>
          <BigTool $w={42}>
            <BigIcon><CellStyleIcon /></BigIcon>
            <BigLabel>Hücre</BigLabel>
            <BigLabel>Stilleri<Chev s={6} /></BigLabel>
          </BigTool>
        </GroupBody>
        <GroupLabel $ml={-8}>Stiller</GroupLabel>
      </Group>

      <Group $w={120} $pad={7}>
        <GroupBody>
          <BigTool $w={36}>
            <BigIcon><InsertIcon /></BigIcon>
            <BigLabel>Ekle</BigLabel>
            <BigLabel><Chev /></BigLabel>
          </BigTool>
          <BigTool $w={36}>
            <BigIcon><DeleteIcon /></BigIcon>
            <BigLabel>Sil</BigLabel>
            <BigLabel><Chev /></BigLabel>
          </BigTool>
          <BigTool $w={36}>
            <BigIcon><FormatIcon /></BigIcon>
            <BigLabel>Biçim</BigLabel>
            <BigLabel><Chev /></BigLabel>
          </BigTool>
        </GroupBody>
        <GroupLabel $ml={-7}>Hücreler</GroupLabel>
      </Group>

      <Group $w={157} $pad={8}>
        <GroupBody>
          <SmallCol $w={36} $start>
            <SmallRow $w={31}><SigmaIcon>Σ</SigmaIcon><Chev /></SmallRow>
            <SmallRow $w={26}><FillDown /><Chev /></SmallRow>
            <SmallRow $w={26}><EraserIcon /><Chev /></SmallRow>
          </SmallCol>
          <BigTool $w={68}>
            <BigIcon><SortIcon /></BigIcon>
            <BigLabel>Sırala ve Filtre</BigLabel>
            <BigLabel>Uygula<Chev s={6} /></BigLabel>
          </BigTool>
          <BigTool $w={34}>
            <BigIcon><FindIcon /></BigIcon>
            <BigLabel>Bul ve</BigLabel>
            <BigLabel>Seç<Chev s={6} /></BigLabel>
          </BigTool>
        </GroupBody>
        <GroupLabel $ml={-8}>Düzenleme</GroupLabel>
      </Group>

      <Group $w={58}>
        <GroupBody>
          <BigTool $w={58}>
            <BigIcon><AddinIcon /></BigIcon>
            <BigLabel>Eklentiler</BigLabel>
          </BigTool>
        </GroupBody>
        <GroupLabel>Eklentiler</GroupLabel>
      </Group>

      <RibbonCollapse><ChevronDown size={13} strokeWidth={1.4} /></RibbonCollapse>
    </Ribbon>
  );
}

export default function App() {
  return (
    <Page>
      <GlobalStyle />
      <TitleBar>
        <QuickIcon $w={15}><ExcelIcon /></QuickIcon>
        <QuickIcon $w={22} $ml={8}><Undo2 size={15} strokeWidth={1.4} /></QuickIcon>
        <QuickIcon $w={8}><Chev /></QuickIcon>
        <QuickIcon $w={24} $dim><Redo2 size={15} strokeWidth={1.4} /></QuickIcon>
        <QuickIcon $w={8} $dim><Chev c="#bbb" /></QuickIcon>
        <QuickIcon $w={22}><SaveIcon /></QuickIcon>
        <AutoSave>Otomatik Kaydet</AutoSave>
        <Toggle />
        <QuickIcon $w={31}><Chev s={8} /></QuickIcon>
        <DocTitle>2025-3 DEĞER • Kaydedildi <ChevronDown size={12} strokeWidth={1.4} /></DocTitle>
        <TopSearch><MirrorSearch size={15} strokeWidth={1.3} />Ara</TopSearch>
        <Avatar>MB</Avatar>
        <WinButtons>
          <WinButton><Minus size={13} strokeWidth={1.2} /></WinButton>
          <WinButton>
            <svg width="12" height="12" viewBox="0 0 12 12" fill="none" stroke="#444"><rect x="1.500" y="3" width="7" height="8" rx="1" /><path d="M4 3V1.500h6v7H8.500" /></svg>
          </WinButton>
          <WinButton><X size={14} strokeWidth={1.2} /></WinButton>
        </WinButtons>
      </TitleBar>

      <MenuBar>
        {['Dosya', 'Giriş', 'Ekle', 'Sayfa Düzeni', 'Formüller', 'Veri', 'Gözden Geçir', 'Görünüm', 'Geliştirici', 'Yardım'].map(m => (
          <MenuItem key={m} $active={m === 'Giriş'}>{m}</MenuItem>
        ))}
        <MenuActions>
          <CommentButton><MessageSquare size={11} strokeWidth={1.3} />Açıklamalar</CommentButton>
          <ShareButton><Share2 size={11} strokeWidth={1.3} />Paylaş<ChevronDown size={9} /></ShareButton>
        </MenuActions>
      </MenuBar>

      <RibbonBar />

      <FormulaBar>
        <NameBox>Z2<ChevronDown size={12} strokeWidth={1.4} /></NameBox>
        <FormulaDots><MoreVertical size={11} strokeWidth={1.8} /></FormulaDots>
        <FormulaIcons>
          <X size={14} strokeWidth={1.2} />
          <svg width="14" height="14" viewBox="0 0 14 14" fill="none" stroke="#bdbdbd"><path d="M1 7l4 5 8-10" /></svg>
          <Fx>fx</Fx>
        </FormulaIcons>
        <FormulaInput>
          =ÇAPRAZARA(A2;'SAYFA 1'!$A$4:$A$642;'SAYFA 1'!QR4:QR642;"AD")
          <ChevronDown size={13} strokeWidth={1.3} />
        </FormulaInput>
      </FormulaBar>

      <SheetArea>
        <SheetMain>
          <ColHeaders>
            <ColHead />
            {columns.map(c => <ColHead key={c} $sel={c === 'Z'}>{c}</ColHead>)}
          </ColHeaders>
          <SheetBody>
            <RowHeads>
              {[1, 2, 3, 4, 5, 6, 7, 8].map(n => <RowHead key={n} $sel={n === 2}>{n}</RowHead>)}
            </RowHeads>
            <Sheet />
          </SheetBody>
        </SheetMain>
        <VScroll>
          <ScrollUp />
          <ScrollThumb />
        </VScroll>
      </SheetArea>

      <TabsBar>
        <TabNav><ChevronLeft size={13} strokeWidth={1.3} /><ChevronRight size={13} strokeWidth={1.3} /></TabNav>
        <SheetTab $w={55}>SAYFA 1</SheetTab>
        <SheetTab $w={50} $bg="#000" $fg="#f2f2f2">PARÇA</SheetTab>
        <SheetTab $w={62} $bg="#b00000" $fg="#f0c8c8" $mr={7}>BİLANÇO</SheetTab>
        <SheetTab $w={57} $mr={7}>VERİLER</SheetTab>
        <SheetTab $w={61} $bg="#000" $fg="#f2f2f2" $mr={7}>YAPIŞTIR</SheetTab>
        <SheetTab $w={47} $mr={7}>C.fiyat</SheetTab>
        <SheetTab $w={54} $mr={7}>ZİRAAT</SheetTab>
        <ActiveTab $w={88}><span>2025-6 VİDEO</span></ActiveTab>
        <SheetTab $w={88} $bg="#2f5597" $fg="#dfe6f4">2025-3 VİDEO</SheetTab>
        <AddSheet size={14} strokeWidth={1.3} />
        <HScrollWrap>
          <MoreVertical size={11} strokeWidth={1.8} />
          <HScroll>
            <Arrow $dir="l" />
            <ThumbTrack><HThumb /></ThumbTrack>
            <Arrow $dir="r" />
          </HScroll>
        </HScrollWrap>
      </TabsBar>

      <StatusBar>
        Hazır
        <QuickIcon $w={43}><MacroIcon /></QuickIcon>
        <AccessIcon />
        <StatusHint>Erişilebilirlik: Önerilere göz atın</StatusHint>
        <StatusRight>
          <ViewBtn $w={32} $active><NormalView /></ViewBtn>
          <ViewBtn $w={34}><PageView /></ViewBtn>
          <ViewBtn $w={33}><BreakView /></ViewBtn>
          <ViewBtn $w={14}><Minus size={9} /></ViewBtn>
          <ZoomTrack><ZoomThumb /></ZoomTrack>
          <ViewBtn $w={12}><Plus size={9} /></ViewBtn>
          <ZoomText>%80</ZoomText>
        </StatusRight>
      </StatusBar>

      <Taskbar>
        <WinLogo />
        <TaskSearch>
          <Search size={15} strokeWidth={1.8} color="#333" />
          Ara
          <SearchArt width="44" height="23" viewBox="0 0 44 23">
            <path d="M2 16c3-8 12-12 22-10 5-4 14-4 18 4 2 6-2 12-8 12H10C5 22 1 20 2 16z" fill="#39b6e0" />
            <path d="M24 4c6-4 16-2 18 6 2 6-3 12-8 12l-6-4z" fill="#66b84a" />
            <path d="M24 5c5 2 10 8 8 17h-6c1-6-1-11-5-14z" fill="#9a8070" />
          </SearchArt>
        </TaskSearch>
        <TaskIcon><ObsIcon /></TaskIcon>
        <TaskIcon><OutlookIcon /></TaskIcon>
        <TaskIcon><CopilotIcon /></TaskIcon>
        <TaskIcon><ChromeIcon /><RunMark /></TaskIcon>
        <TaskIcon><EdgeIcon /></TaskIcon>
        <TaskIcon><FirefoxIcon /></TaskIcon>
        <TaskIcon><SnipIcon /><RunMark /></TaskIcon>
        <TaskIcon><StoreIcon /></TaskIcon>
        <TaskIcon><TodoIcon /></TaskIcon>
        <TaskIcon><ClapIcon /></TaskIcon>
        <TaskIcon $active><ExcelIcon s={22} /><ActiveMark /></TaskIcon>
        <Tray>
          <TrayIcon $w={24}><ChevronUp size={15} strokeWidth={1.6} /></TrayIcon>
          <TrayIcon $w={32} $blue><Mic size={16} strokeWidth={1.4} /></TrayIcon>
          <TrayIcon $w={20}><Wifi size={15} strokeWidth={1.4} /></TrayIcon>
          <TrayIcon $w={20}><Volume2 size={15} strokeWidth={1.4} /></TrayIcon>
          <TrayIcon $w={20}><BatteryIcon /></TrayIcon>
          <Clock>14:14<br />19.08.2025</Clock>
          <TrayIcon $w={26}><BellIcon /></TrayIcon>
        </Tray>
      </Taskbar>
    </Page>
  );
}
